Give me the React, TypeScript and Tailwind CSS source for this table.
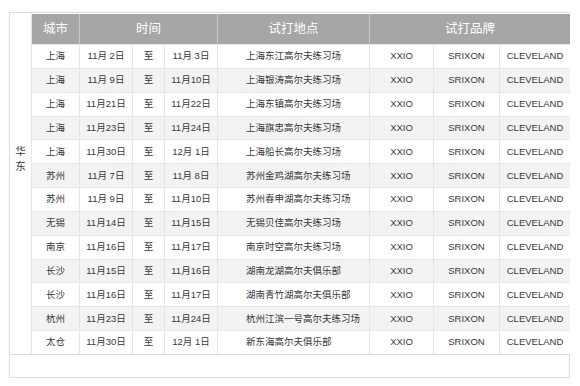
const rows: [string, string, string, string][] = [
  ['上海', '11月 2日', '11月 3日', '上海东江高尔夫练习场'],
  ['上海', '11月 9日', '11月10日', '上海银涛高尔夫练习场'],
  ['上海', '11月21日', '11月22日', '上海东镇高尔夫练习场'],
  ['上海', '11月23日', '11月24日', '上海旗忠高尔夫练习场'],
  ['上海', '11月30日', '12月 1日', '上海船长高尔夫练习场'],
  ['苏州', '11月 7日', '11月 8日', '苏州金鸡湖高尔夫练习场'],
  ['苏州', '11月 9日', '11月10日', '苏州春申湖高尔夫练习场'],
  ['无锡', '11月14日', '11月15日', '无锡贝佳高尔夫练习场'],
  ['南京', '11月16日', '11月17日', '南京时空高尔夫练习场'],
  ['长沙', '11月15日', '11月16日', '湖南龙湖高尔夫俱乐部'],
  ['长沙', '11月16日', '11月17日', '湖南青竹湖高尔夫俱乐部'],
  ['杭州', '11月23日', '11月24日', '杭州江滨一号高尔夫练习场'],
  ['太仓', '11月30日', '12月 1日', '新东海高尔夫俱乐部'],
];

const cols = 'grid grid-cols-[48px_53px_32px_53px_152px_64px_66px_70px]';
const cell = 'flex items-center justify-center border-r border-[#e6e6e6] last:border-r-0';

export default function App() {
  return (
    <div
      className="w-[580px] h-[386px] bg-white pt-[12px] pl-[9px] text-[#383838]"
      style={{ fontFamily: '"Liberation Sans", "Noto Sans CJK SC", sans-serif' }}
    >
      <div className="w-[561px] border-l border-t border-[#dcdcdc]">
        <div className="flex">
          {/* region column */}
          <div className="w-[23px] border-r border-[#e6e6e6] pt-[131px] flex flex-col items-center text-[10.5px] leading-[15px]">
            <span>华</span>
            <span>东</span>
          </div>

          <div className="flex-1">
            <div className="grid grid-cols-[48px_138px_152px_200px] h-[30px] mt-[1px] bg-[#a6a6a6] text-white text-[12.5px]">
              <div className="flex items-center justify-center border-r border-[#c8c8c8]">城市</div>
              <div className="flex items-center justify-center border-r border-[#c8c8c8]">时间</div>
              <div className="flex items-center justify-center border-r border-[#c8c8c8]">试打地点</div>
              <div className="flex items-center justify-center">试打品牌</div>
            </div>

            {rows.map(([city, from, to, place], i) => (
              <div
                key={i}
                className={`${cols} h-[23.85px] text-[9.5px] border-t border-[#e6e6e6] ${i % 2 === 1 ? 'bg-[#f3f3f3]' : 'bg-white'}`}
              >
                <div className={cell}>{city}</div>
                <div className={cell}>{from}</div>
                <div className={cell}>至</div>
                <div className={cell}>{to}</div>
                <div className={`${cell} !justify-start pl-[28px]`}>{place}</div>
                <div className={cell}>XXIO</div>
                <div className={cell}>SRIXON</div>
                <div className={cell}>CLEVELAND</div>
              </div>
            ))}
          </div>
        </div>

        {/* empty footer row */}
        <div className="h-[24px] border-t border-b border-r border-[#dcdcdc]" />
      </div>
    </div>
  );
}
